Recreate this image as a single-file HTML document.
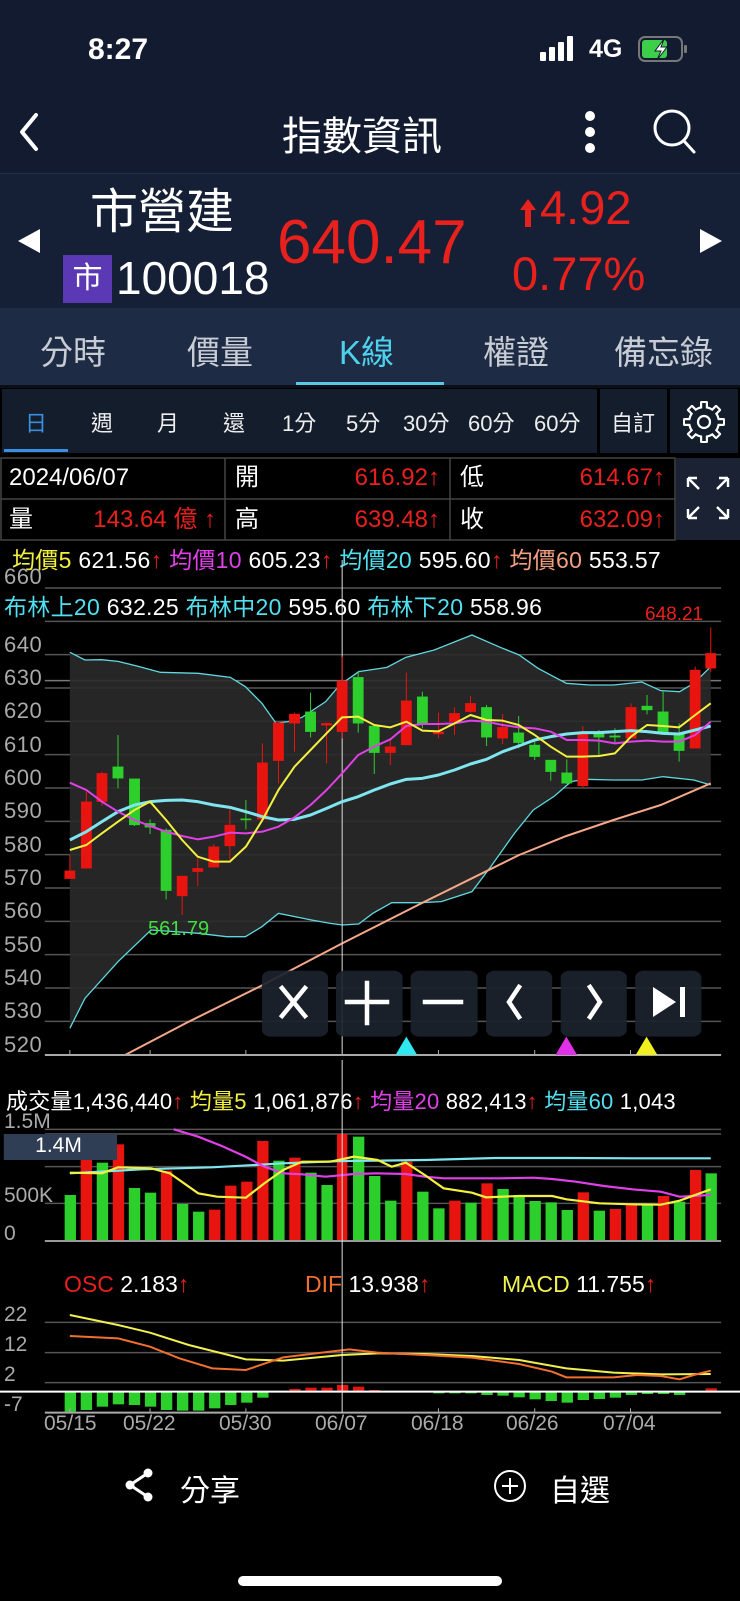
<!DOCTYPE html>
<html><head><meta charset="utf-8">
<style>
*{margin:0;padding:0;box-sizing:border-box}
body{width:740px;height:1601px;background:#000;position:relative;overflow:hidden;font-family:"Liberation Sans","Noto Sans CJK TC",sans-serif;color:#fff}
.a{position:absolute;white-space:nowrap}
.r{color:#e8211d}
.c{font-family:"Liberation Sans","Noto Sans CJK TC",sans-serif}
.t{line-height:28px;font-size:24px}
</style></head><body>
<div class="a" style="left:0;top:0;width:740px;height:174px;background:#121b2f"></div>
<div class="a" style="left:0;top:174px;width:740px;height:134px;background:#152036"></div>
<div class="a" style="left:0;top:173px;width:740px;height:1px;background:#22304a"></div>
<div class="a" style="left:0;top:308px;width:740px;height:77px;background:#1d2b45"></div>
<div class="a" style="left:0;top:385px;width:740px;height:3px;background:#0a0f18"></div>
<!-- status -->
<div class="a" style="left:88px;top:33px;font-size:30px;font-weight:bold">8:27</div>
<svg class="a" style="left:540px;top:36px" width="40" height="26"><rect x="0" y="16" width="6" height="9" rx="1" fill="#fff"/><rect x="9" y="11" width="6" height="14" rx="1" fill="#fff"/><rect x="18" y="6" width="6" height="19" rx="1" fill="#fff"/><rect x="27" y="0" width="6" height="25" rx="1" fill="#fff"/></svg>
<div class="a" style="left:589px;top:35px;font-size:25px;font-weight:bold">4G</div>
<svg class="a" style="left:638px;top:36px" width="52" height="26"><rect x="1" y="1" width="43" height="24" rx="6" fill="none" stroke="#777" stroke-width="2"/><rect x="4" y="4" width="25" height="18" rx="3" fill="#3ecf4a"/><rect x="46" y="9" width="3" height="8" rx="1" fill="#777"/><path d="M26 3 L17 15 L23 15 L19 24 L29 11 L23 11 Z" fill="#fff" stroke="#121b2f" stroke-width="1"/></svg>
<!-- nav -->
<svg class="a" style="left:16px;top:112px" width="26" height="40"><path d="M20 3 L6 20 L20 37" fill="none" stroke="#fff" stroke-width="4" stroke-linecap="round" stroke-linejoin="round"/></svg>
<div class="a c" style="left:282px;top:104px;font-size:40px">指數資訊</div>
<svg class="a" style="left:580px;top:108px" width="20" height="48"><circle cx="10" cy="8" r="5" fill="#fff"/><circle cx="10" cy="24" r="5" fill="#fff"/><circle cx="10" cy="40" r="5" fill="#fff"/></svg>
<svg class="a" style="left:652px;top:108px" width="46" height="48"><circle cx="20" cy="20" r="17" fill="none" stroke="#fff" stroke-width="3"/><path d="M32 33 L42 44" stroke="#fff" stroke-width="3" stroke-linecap="round"/></svg>
<!-- stock info -->
<svg class="a" style="left:16px;top:228px" width="26" height="26"><path d="M24 1 L2 13 L24 25 Z" fill="#fff"/></svg>
<svg class="a" style="left:698px;top:228px" width="26" height="26"><path d="M2 1 L24 13 L2 25 Z" fill="#fff"/></svg>
<div class="a c" style="left:90px;top:183px;font-size:48px;line-height:60px">市營建</div>
<div class="a c" style="left:63px;top:255px;width:49px;height:48px;background:#5b38b4;font-size:30px;text-align:center;line-height:48px">市</div>
<div class="a" style="left:116px;top:250px;font-size:46px;line-height:56px">100018</div>
<div class="a r" style="left:277px;top:208px;font-size:62px;line-height:70px">640.47</div>
<svg class="a" style="left:519px;top:198px" width="18" height="30"><path d="M9 1 L17 12 L12 12 L12 29 L6 29 L6 12 L1 12 Z" fill="#e8211d"/></svg>
<div class="a r" style="left:540px;top:180px;font-size:47px;line-height:56px">4.92</div>
<div class="a r" style="left:512px;top:246px;font-size:47px;line-height:56px">0.77%</div>
<!-- tabs -->
<div class="a c" style="left:40px;top:326px;font-size:33px;color:#c8ccd4">分時</div>
<div class="a c" style="left:187px;top:326px;font-size:33px;color:#c8ccd4">價量</div>
<div class="a c" style="left:339px;top:326px;font-size:33px;color:#4fd0ec">K線</div>
<div class="a c" style="left:483px;top:326px;font-size:33px;color:#c8ccd4">權證</div>
<div class="a c" style="left:614px;top:326px;font-size:33px;color:#c8ccd4">備忘錄</div>
<div class="a" style="left:296px;top:382px;width:148px;height:3px;background:#58c8e4"></div>
<!-- period bar -->
<div class="a" style="left:2px;top:389px;width:595px;height:64px;background:#141d2c"></div>
<div class="a" style="left:600px;top:389px;width:67px;height:64px;background:#141d2c"></div>
<div class="a" style="left:670px;top:389px;width:68px;height:64px;background:#141d2c"></div>
<div class="a" style="left:4px;top:449px;width:64px;height:3px;background:#3a8ee0"></div>
<div class="a c" style="top:406px;left:25px;font-size:22px;color:#3a8ee0">日</div>
<div class="a c" style="top:406px;left:91px;font-size:22px;color:#eee">週</div>
<div class="a c" style="top:406px;left:157px;font-size:22px;color:#eee">月</div>
<div class="a c" style="top:406px;left:223px;font-size:22px;color:#eee">還</div>
<div class="a c" style="top:406px;left:282px;font-size:22px;color:#eee">1分</div>
<div class="a c" style="top:406px;left:346px;font-size:22px;color:#eee">5分</div>
<div class="a c" style="top:406px;left:403px;font-size:22px;color:#eee">30分</div>
<div class="a c" style="top:406px;left:468px;font-size:22px;color:#eee">60分</div>
<div class="a c" style="top:406px;left:534px;font-size:22px;color:#eee">60分</div>
<div class="a c" style="top:406px;left:611px;font-size:22px;color:#eee">自訂</div>
<svg class="a" style="left:681px;top:399px" width="46" height="46" viewBox="0 0 46 46">
<g fill="#fff" transform="translate(23 23)">
<circle r="16"/>
<rect x="-4" y="-21" width="8" height="9" rx="1.5"/>
<rect x="-4" y="-21" width="8" height="9" rx="1.5" transform="rotate(45)"/>
<rect x="-4" y="-21" width="8" height="9" rx="1.5" transform="rotate(90)"/>
<rect x="-4" y="-21" width="8" height="9" rx="1.5" transform="rotate(135)"/>
<rect x="-4" y="-21" width="8" height="9" rx="1.5" transform="rotate(180)"/>
<rect x="-4" y="-21" width="8" height="9" rx="1.5" transform="rotate(225)"/>
<rect x="-4" y="-21" width="8" height="9" rx="1.5" transform="rotate(270)"/>
<rect x="-4" y="-21" width="8" height="9" rx="1.5" transform="rotate(315)"/>
</g>
<g fill="#141d2c" transform="translate(23 23)">
<circle r="13.8"/>
<rect x="-1.8" y="-19" width="3.6" height="7" transform="rotate(0)"/>
<rect x="-1.8" y="-19" width="3.6" height="7" transform="rotate(45)"/>
<rect x="-1.8" y="-19" width="3.6" height="7" transform="rotate(90)"/>
<rect x="-1.8" y="-19" width="3.6" height="7" transform="rotate(135)"/>
<rect x="-1.8" y="-19" width="3.6" height="7" transform="rotate(180)"/>
<rect x="-1.8" y="-19" width="3.6" height="7" transform="rotate(225)"/>
<rect x="-1.8" y="-19" width="3.6" height="7" transform="rotate(270)"/>
<rect x="-1.8" y="-19" width="3.6" height="7" transform="rotate(315)"/>
</g>
<circle cx="23" cy="23" r="6" fill="none" stroke="#fff" stroke-width="2.2"/></svg>
<!-- info table -->
<div class="a" style="left:676px;top:458px;width:64px;height:82px;background:#1a2233"></div>
<svg class="a" style="left:0;top:457px" width="676" height="84"><g fill="none" stroke="#444" stroke-width="1.5"><rect x="1" y="1" width="674" height="82"/><line x1="1" y1="42" x2="675" y2="42"/><line x1="225" y1="1" x2="225" y2="83"/><line x1="450" y1="1" x2="450" y2="83"/></g></svg>
<svg class="a" style="left:684px;top:474px" width="48" height="48"><g fill="none" stroke="#fff" stroke-width="2.4"><path d="M4 4 L15 15 M4 4 h9 M4 4 v9"/><path d="M44 4 L33 15 M44 4 h-9 M44 4 v9"/><path d="M4 44 L15 33 M4 44 h9 M4 44 v-9"/><path d="M44 44 L33 33 M44 44 h-9 M44 44 v-9"/></g></svg>
<div class="a t" style="left:9px;top:464px">2024/06/07</div>
<div class="a c t" style="left:9px;top:506px">量</div>
<div class="a r c t" style="left:0;width:216px;text-align:right;top:506px">143.64 億 ↑</div>
<div class="a c t" style="left:235px;top:464px">開</div>
<div class="a r t" style="left:0;width:440px;text-align:right;top:464px">616.92↑</div>
<div class="a c t" style="left:235px;top:506px">高</div>
<div class="a r t" style="left:0;width:440px;text-align:right;top:506px">639.48↑</div>
<div class="a c t" style="left:460px;top:464px">低</div>
<div class="a r t" style="left:0;width:665px;text-align:right;top:464px">614.67↑</div>
<div class="a c t" style="left:460px;top:506px">收</div>
<div class="a r t" style="left:0;width:665px;text-align:right;top:506px">632.09↑</div>
<!-- MA legend -->
<div class="a c" style="left:12px;top:546px;font-size:23px;line-height:28px;letter-spacing:0.3px"><span style="color:#f4f040">均價5</span> 621.56<span class="r">↑</span> <span style="color:#e040e8">均價10</span> 605.23<span class="r">↑</span> <span style="color:#50e0f0">均價20</span> 595.60<span class="r">↑</span> <span style="color:#f0a080">均價60</span> 553.57</div>
<!-- main chart -->
<svg class="a" style="left:0;top:560px" width="740" height="500" viewBox="0 -180 1568 1500" preserveAspectRatio="none">
<g stroke="#555" stroke-width="1.5">
<line x1="95" x2="1528" y1="-96" y2="-96" vector-effect="non-scaling-stroke"/>
<line x1="95" x2="1528" y1="4" y2="4" vector-effect="non-scaling-stroke"/>
<line x1="95" x2="1528" y1="104" y2="104" vector-effect="non-scaling-stroke"/>
<line x1="95" x2="1528" y1="204" y2="204" vector-effect="non-scaling-stroke"/>
<line x1="95" x2="1528" y1="182" y2="182" stroke="#777" vector-effect="non-scaling-stroke"/>
<line x1="95" x2="1528" y1="304" y2="304" vector-effect="non-scaling-stroke"/>
<line x1="95" x2="1528" y1="404" y2="404" vector-effect="non-scaling-stroke"/>
<line x1="95" x2="1528" y1="504" y2="504" vector-effect="non-scaling-stroke"/>
<line x1="95" x2="1528" y1="604" y2="604" vector-effect="non-scaling-stroke"/>
<line x1="95" x2="1528" y1="704" y2="704" vector-effect="non-scaling-stroke"/>
<line x1="95" x2="1528" y1="804" y2="804" vector-effect="non-scaling-stroke"/>
<line x1="95" x2="1528" y1="904" y2="904" vector-effect="non-scaling-stroke"/>
<line x1="95" x2="1528" y1="1004" y2="1004" vector-effect="non-scaling-stroke"/>
<line x1="95" x2="1528" y1="1104" y2="1104" vector-effect="non-scaling-stroke"/>
<line x1="95" x2="1528" y1="1204" y2="1204" vector-effect="non-scaling-stroke"/>
</g>
<polygon fill="#2a2a2a" fill-opacity="0.9" points="148,97 180,120 215,119 250,124 290,138 340,157 420,160 488,172 520,200 555,250 585,310 610,305 640,292 690,245 720,195 760,155 820,142 860,112 920,90 1000,45 1060,82 1100,105 1140,145 1200,190 1250,195 1300,195 1360,186 1400,212 1440,215 1470,190 1506,140 1506,495 1470,480 1405,470 1360,480 1300,480 1240,478 1210,485 1175,528 1130,570 1090,640 1040,740 1000,815 935,845 890,848 830,848 790,880 760,912 725,915 700,910 660,900 590,880 555,920 520,950 480,950 420,940 320,930 250,1025 180,1135 148,1225"/>
<g fill="none" stroke="#5fd8e0" stroke-width="1.3">
<polyline vector-effect="non-scaling-stroke" points="148,97 180,120 215,119 250,124 290,138 340,157 420,160 488,172 520,200 555,250 585,310 610,305 640,292 690,245 720,195 760,155 820,142 860,112 920,90 1000,45 1060,82 1100,105 1140,145 1200,190 1250,195 1300,195 1360,186 1400,212 1440,215 1470,190 1506,140"/>
<polyline vector-effect="non-scaling-stroke" points="148,1225 180,1135 250,1025 320,930 420,940 480,950 520,950 555,920 590,880 660,900 700,910 725,915 760,912 790,880 830,848 890,848 935,845 1000,815 1040,740 1090,640 1130,570 1175,528 1210,485 1240,478 1300,480 1360,480 1405,470 1470,480 1506,495"/>
</g>
<polyline fill="none" stroke="#f4a888" stroke-width="2" vector-effect="non-scaling-stroke" points="265,1305 400,1205 550,1100 725,970 900,845 1000,775 1100,705 1200,648 1300,600 1400,555 1506,490"/>
<line x1="725" x2="725" y1="-180" y2="1305" stroke="#ddd" stroke-width="1" vector-effect="non-scaling-stroke"/>
<g stroke="#e8140f" fill="#e8140f">
<line x1="148" x2="148" y1="705" y2="776" vector-effect="non-scaling-stroke"/><rect x="137" y="752" width="22" height="24"/>
<line x1="183" x2="183" y1="515" y2="745" vector-effect="non-scaling-stroke"/><rect x="172" y="545" width="22" height="200"/>
<line x1="216" x2="216" y1="455" y2="558" vector-effect="non-scaling-stroke"/><rect x="205" y="460" width="22" height="85"/>
<line x1="386" x2="386" y1="768" y2="885" vector-effect="non-scaling-stroke"/><rect x="375" y="768" width="22" height="60"/>
<line x1="419" x2="419" y1="715" y2="798" vector-effect="non-scaling-stroke"/><rect x="408" y="745" width="22" height="10"/>
<line x1="453" x2="453" y1="672" y2="742" vector-effect="non-scaling-stroke"/><rect x="442" y="680" width="22" height="62"/>
<line x1="487" x2="487" y1="568" y2="718" vector-effect="non-scaling-stroke"/><rect x="476" y="615" width="22" height="63"/>
<line x1="556" x2="556" y1="370" y2="598" vector-effect="non-scaling-stroke"/><rect x="545" y="428" width="22" height="170"/>
<line x1="590" x2="590" y1="308" y2="490" vector-effect="non-scaling-stroke"/><rect x="579" y="308" width="22" height="114"/>
<line x1="624" x2="624" y1="278" y2="395" vector-effect="non-scaling-stroke"/><rect x="613" y="282" width="22" height="28"/>
<line x1="692" x2="692" y1="308" y2="430" vector-effect="non-scaling-stroke"/><rect x="681" y="310" width="22" height="6"/>
<line x1="725" x2="725" y1="110" y2="355" vector-effect="non-scaling-stroke"/><rect x="714" y="182" width="22" height="153"/>
<line x1="827" x2="827" y1="355" y2="435" vector-effect="non-scaling-stroke"/><rect x="816" y="380" width="22" height="18"/>
<line x1="861" x2="861" y1="158" y2="375" vector-effect="non-scaling-stroke"/><rect x="850" y="242" width="22" height="133"/>
<line x1="929" x2="929" y1="278" y2="355" vector-effect="non-scaling-stroke"/><rect x="918" y="335" width="22" height="7"/>
<line x1="963" x2="963" y1="262" y2="345" vector-effect="non-scaling-stroke"/><rect x="952" y="280" width="22" height="25"/>
<line x1="997" x2="997" y1="228" y2="278" vector-effect="non-scaling-stroke"/><rect x="986" y="250" width="22" height="25"/>
<line x1="1065" x2="1065" y1="282" y2="372" vector-effect="non-scaling-stroke"/><rect x="1054" y="322" width="22" height="33"/>
<line x1="1235" x2="1235" y1="318" y2="502" vector-effect="non-scaling-stroke"/><rect x="1224" y="340" width="22" height="158"/>
<line x1="1337" x2="1337" y1="250" y2="355" vector-effect="non-scaling-stroke"/><rect x="1326" y="262" width="22" height="93"/>
<line x1="1473" x2="1473" y1="140" y2="385" vector-effect="non-scaling-stroke"/><rect x="1462" y="150" width="22" height="235"/>
<line x1="1506" x2="1506" y1="22" y2="155" vector-effect="non-scaling-stroke"/><rect x="1495" y="100" width="22" height="45"/>
</g>
<g stroke="#2ccf2c" fill="#2ccf2c">
<line x1="250" x2="250" y1="345" y2="505" vector-effect="non-scaling-stroke"/><rect x="239" y="440" width="22" height="35"/>
<line x1="285" x2="285" y1="476" y2="618" vector-effect="non-scaling-stroke"/><rect x="274" y="476" width="22" height="139"/>
<line x1="318" x2="318" y1="598" y2="642" vector-effect="non-scaling-stroke"/><rect x="307" y="610" width="22" height="12"/>
<line x1="352" x2="352" y1="625" y2="838" vector-effect="non-scaling-stroke"/><rect x="341" y="630" width="22" height="182"/>
<line x1="521" x2="521" y1="540" y2="628" vector-effect="non-scaling-stroke"/><rect x="510" y="596" width="22" height="4"/>
<line x1="658" x2="658" y1="218" y2="352" vector-effect="non-scaling-stroke"/><rect x="647" y="275" width="22" height="60"/>
<line x1="759" x2="759" y1="158" y2="338" vector-effect="non-scaling-stroke"/><rect x="748" y="172" width="22" height="138"/>
<line x1="793" x2="793" y1="318" y2="462" vector-effect="non-scaling-stroke"/><rect x="782" y="318" width="22" height="80"/>
<line x1="895" x2="895" y1="215" y2="325" vector-effect="non-scaling-stroke"/><rect x="884" y="230" width="22" height="82"/>
<line x1="1031" x2="1031" y1="255" y2="378" vector-effect="non-scaling-stroke"/><rect x="1020" y="262" width="22" height="90"/>
<line x1="1099" x2="1099" y1="288" y2="385" vector-effect="non-scaling-stroke"/><rect x="1088" y="338" width="22" height="30"/>
<line x1="1133" x2="1133" y1="360" y2="420" vector-effect="non-scaling-stroke"/><rect x="1122" y="375" width="22" height="35"/>
<line x1="1167" x2="1167" y1="420" y2="482" vector-effect="non-scaling-stroke"/><rect x="1156" y="420" width="22" height="35"/>
<line x1="1201" x2="1201" y1="418" y2="492" vector-effect="non-scaling-stroke"/><rect x="1190" y="458" width="22" height="32"/>
<line x1="1269" x2="1269" y1="330" y2="408" vector-effect="non-scaling-stroke"/><rect x="1258" y="340" width="22" height="12"/>
<line x1="1303" x2="1303" y1="325" y2="368" vector-effect="non-scaling-stroke"/><rect x="1292" y="347" width="22" height="5"/>
<line x1="1371" x2="1371" y1="225" y2="283" vector-effect="non-scaling-stroke"/><rect x="1360" y="258" width="22" height="12"/>
<line x1="1405" x2="1405" y1="215" y2="338" vector-effect="non-scaling-stroke"/><rect x="1394" y="275" width="22" height="63"/>
<line x1="1439" x2="1439" y1="310" y2="425" vector-effect="non-scaling-stroke"/><rect x="1428" y="340" width="22" height="52"/>
</g>
<g fill="none" stroke-width="2" stroke-linejoin="round">
<polyline vector-effect="non-scaling-stroke" stroke="#7fe6f0" stroke-width="3" points="148,660 183,635 216,605 250,575 285,555 318,545 352,541 386,540 419,545 453,555 487,562 521,575 556,590 590,600 624,598 658,585 692,565 725,545 759,530 793,510 827,492 861,478 895,475 929,465 963,450 997,432 1031,418 1065,395 1099,378 1133,360 1167,350 1201,342 1235,338 1269,338 1303,335 1337,332 1371,335 1405,340 1439,342 1473,330 1506,318"/>
<polyline vector-effect="non-scaling-stroke" stroke="#e040e8" points="148,488 183,510 216,545 250,575 285,600 318,618 352,635 386,648 419,658 453,650 487,638 521,640 556,635 590,620 624,592 658,555 692,510 725,460 759,405 793,380 827,358 861,318 895,312 929,312 963,310 997,302 1031,305 1065,315 1099,322 1133,325 1167,335 1201,360 1235,360 1269,362 1303,370 1337,365 1371,362 1405,365 1439,365 1473,345 1506,305"/>
<polyline vector-effect="non-scaling-stroke" stroke="#f4f040" points="148,690 183,675 216,640 250,605 285,570 318,545 352,600 386,660 419,710 453,725 487,725 521,680 556,600 590,510 624,440 658,390 692,340 725,292 759,290 793,315 827,322 861,305 895,332 929,334 963,310 997,285 1031,300 1065,302 1099,315 1133,345 1167,380 1201,410 1235,410 1269,408 1303,400 1337,350 1371,315 1405,318 1439,322 1473,285 1506,250"/>
</g>
<line x1="95" x2="1528" y1="1305" y2="1305" stroke="#aaa" stroke-width="2" vector-effect="non-scaling-stroke"/>
<g stroke="#aaa"><line x1="148" x2="148" y1="1290" y2="1305" vector-effect="non-scaling-stroke"/><line x1="318" x2="318" y1="1290" y2="1305" vector-effect="non-scaling-stroke"/><line x1="521" x2="521" y1="1290" y2="1305" vector-effect="non-scaling-stroke"/><line x1="929" x2="929" y1="1290" y2="1305" vector-effect="non-scaling-stroke"/><line x1="1133" x2="1133" y1="1290" y2="1305" vector-effect="non-scaling-stroke"/><line x1="1336" x2="1336" y1="1290" y2="1305" vector-effect="non-scaling-stroke"/></g>
<g fill="#1c232e" fill-opacity="0.92"><rect x="555" y="1052" width="140" height="198" rx="20"/><rect x="712" y="1052" width="141" height="198" rx="20"/><rect x="870" y="1052" width="142" height="198" rx="20"/><rect x="1030" y="1052" width="140" height="198" rx="20"/><rect x="1188" y="1052" width="140" height="198" rx="20"/><rect x="1346" y="1052" width="140" height="198" rx="20"/></g>
<polygon points="838,1305 861,1250 884,1305" fill="#30e8f0"/>
<polygon points="1177,1305 1200,1250 1223,1305" fill="#e030e8"/>
<polygon points="1347,1305 1370,1250 1393,1305" fill="#f0f020"/>
</svg>
<!-- control symbols -->
<svg class="a" style="left:260px;top:970px" width="450" height="66"><g stroke="#fff" stroke-width="4.5" fill="none" stroke-linecap="square"><path d="M22 18 L45 46 M45 18 L22 46"/><path d="M87 32 h40 M107 13 v40"/><path d="M165 32 h36"/><path d="M259 17 L249 32 L259 47"/><path d="M330 17 L340 32 L330 47"/></g><path d="M393 17 L393 47 L416 32 Z" fill="#fff"/><rect x="420" y="17" width="5" height="30" fill="#fff"/></svg>
<!-- y labels -->
<div class="a" style="left:4px;top:0;font-size:22px;color:#aaa;line-height:22px;letter-spacing:0.5px">
<div class="a" style="top:566px">660</div>
<div class="a" style="top:634px">640</div><div class="a" style="top:667px">630</div><div class="a" style="top:700px">620</div><div class="a" style="top:734px">610</div><div class="a" style="top:767px">600</div><div class="a" style="top:800px">590</div><div class="a" style="top:834px">580</div><div class="a" style="top:867px">570</div><div class="a" style="top:900px">560</div><div class="a" style="top:934px">550</div><div class="a" style="top:967px">540</div><div class="a" style="top:1000px">530</div><div class="a" style="top:1034px">520</div>
</div>
<div class="a c" style="left:4px;top:593px;font-size:23px;line-height:28px;color:#50e0f0;letter-spacing:0.3px">布林上20 <span style="color:#fff">632.25</span> 布林中20 <span style="color:#fff">595.60</span> 布林下20 <span style="color:#fff">558.96</span></div>
<div class="a r" style="left:645px;top:604px;font-size:19px">648.21</div>
<div class="a" style="left:148px;top:918px;font-size:20px;color:#40e040">561.79</div>
<!-- volume -->
<div class="a c" style="left:6px;top:1088px;font-size:22px;line-height:28px;letter-spacing:0.2px">成交量1,436,440<span class="r">↑</span> <span style="color:#f4f040">均量5</span> 1,061,876<span class="r">↑</span> <span style="color:#e040e8">均量20</span> 882,413<span class="r">↑</span> <span style="color:#50e0f0">均量60</span> 1,043</div>
<svg class="a" style="left:0;top:1060px" width="740" height="380" viewBox="0 0 1568 1140" preserveAspectRatio="none">
<g stroke="#555" stroke-width="1.5"><line x1="95" x2="1528" y1="208" y2="208" vector-effect="non-scaling-stroke"/><line x1="95" x2="1528" y1="222" y2="222" vector-effect="non-scaling-stroke"/><line x1="95" x2="1528" y1="320" y2="320" vector-effect="non-scaling-stroke"/><line x1="95" x2="1528" y1="430" y2="430" vector-effect="non-scaling-stroke"/>
<line x1="95" x2="1528" y1="787" y2="787" vector-effect="non-scaling-stroke"/><line x1="95" x2="1528" y1="878" y2="878" vector-effect="non-scaling-stroke"/><line x1="95" x2="1528" y1="968" y2="968" vector-effect="non-scaling-stroke"/></g>
<g fill="#e8140f">
<rect x="171" y="290" width="24" height="253"/><rect x="239" y="253" width="24" height="290"/><rect x="341" y="332" width="24" height="211"/><rect x="443" y="449" width="24" height="94"/><rect x="477" y="377" width="24" height="166"/><rect x="511" y="365" width="24" height="178"/><rect x="545" y="243" width="24" height="300"/><rect x="613" y="293" width="24" height="250"/><rect x="714" y="222" width="22" height="321"/><rect x="850" y="305" width="24" height="238"/><rect x="952" y="422" width="24" height="121"/><rect x="1020" y="370" width="24" height="173"/><rect x="1224" y="397" width="24" height="146"/><rect x="1292" y="447" width="24" height="96"/><rect x="1326" y="435" width="24" height="108"/><rect x="1394" y="408" width="24" height="135"/><rect x="1462" y="330" width="24" height="213"/>
</g>
<g fill="#2ccf2c">
<rect x="137" y="405" width="24" height="138"/><rect x="205" y="308" width="24" height="235"/><rect x="273" y="384" width="24" height="159"/><rect x="307" y="398" width="24" height="145"/><rect x="375" y="432" width="24" height="111"/><rect x="409" y="455" width="24" height="88"/><rect x="579" y="302" width="24" height="241"/><rect x="647" y="338" width="24" height="205"/><rect x="681" y="375" width="24" height="168"/><rect x="748" y="230" width="24" height="313"/><rect x="782" y="348" width="24" height="195"/><rect x="816" y="422" width="24" height="121"/><rect x="884" y="395" width="24" height="148"/><rect x="918" y="445" width="24" height="98"/><rect x="986" y="428" width="24" height="115"/><rect x="1054" y="387" width="24" height="156"/><rect x="1088" y="405" width="24" height="138"/><rect x="1122" y="423" width="24" height="120"/><rect x="1156" y="427" width="24" height="116"/><rect x="1190" y="450" width="24" height="93"/><rect x="1258" y="452" width="24" height="91"/><rect x="1360" y="435" width="24" height="108"/><rect x="1428" y="425" width="24" height="118"/><rect x="1495" y="340" width="24" height="203"/>
</g>
<g fill="none" stroke-width="2.2">
<polyline vector-effect="non-scaling-stroke" stroke="#7fe6f0" points="148,340 300,328 450,322 600,310 725,303 800,302 900,300 1050,294 1200,294 1350,295 1506,295"/>
<polyline vector-effect="non-scaling-stroke" stroke="#e040e8" points="368,208 420,230 470,258 520,290 560,320 600,340 640,343 690,350 750,342 800,340 860,342 900,350 940,355 1000,355 1060,355 1130,353 1170,357 1220,365 1280,378 1340,388 1400,395 1440,410 1506,405"/>
<polyline vector-effect="non-scaling-stroke" stroke="#f4f040" points="148,338 216,340 250,322 320,325 360,340 420,400 460,410 521,413 560,370 600,330 640,305 700,305 750,290 800,300 830,320 860,308 900,345 940,385 1000,398 1030,412 1100,408 1170,408 1200,418 1270,430 1340,433 1400,434 1440,422 1506,388"/>
</g>
<line x1="95" x2="1528" y1="543" y2="543" stroke="#999" stroke-width="2" vector-effect="non-scaling-stroke"/>
<rect x="8" y="222" width="240" height="78" fill="#2f3d55"/>
<g fill="#2ccf2c">
<rect x="137" y="995" width="24" height="60"/><rect x="171" y="995" width="24" height="55"/><rect x="205" y="995" width="24" height="45"/><rect x="239" y="995" width="24" height="38"/><rect x="273" y="995" width="24" height="40"/><rect x="307" y="995" width="24" height="45"/><rect x="341" y="995" width="24" height="55"/><rect x="375" y="995" width="24" height="57"/><rect x="409" y="995" width="24" height="57"/><rect x="443" y="995" width="24" height="50"/><rect x="477" y="995" width="24" height="40"/><rect x="511" y="995" width="24" height="33"/><rect x="545" y="995" width="24" height="18"/>
<rect x="918" y="995" width="24" height="5"/><rect x="952" y="995" width="24" height="5"/><rect x="986" y="995" width="24" height="5"/><rect x="1020" y="995" width="24" height="10"/><rect x="1054" y="995" width="24" height="12"/><rect x="1088" y="995" width="24" height="17"/><rect x="1122" y="995" width="24" height="23"/><rect x="1156" y="995" width="24" height="28"/><rect x="1190" y="995" width="24" height="33"/><rect x="1224" y="995" width="24" height="25"/><rect x="1258" y="995" width="24" height="22"/><rect x="1292" y="995" width="24" height="18"/><rect x="1326" y="995" width="24" height="10"/><rect x="1360" y="995" width="24" height="7"/><rect x="1394" y="995" width="24" height="7"/><rect x="1428" y="995" width="24" height="10"/>
</g>
<g fill="#e8140f">
<rect x="613" y="987" width="24" height="8"/><rect x="647" y="983" width="24" height="12"/><rect x="681" y="983" width="24" height="12"/><rect x="714" y="975" width="24" height="20"/><rect x="748" y="980" width="24" height="15"/><rect x="782" y="990" width="24" height="5"/><rect x="1495" y="985" width="24" height="10"/>
</g>
<line x1="0" x2="1568" y1="995" y2="995" stroke="#fff" stroke-width="2" vector-effect="non-scaling-stroke"/>
<g fill="none" stroke-width="2">
<polyline vector-effect="non-scaling-stroke" stroke="#f0f050" points="148,765 250,795 318,818 400,855 521,898 600,902 725,885 800,880 900,882 1000,888 1100,900 1200,925 1300,938 1400,943 1506,942"/>
<polyline vector-effect="non-scaling-stroke" stroke="#f07030" points="148,828 250,835 318,860 380,895 450,925 521,930 600,892 700,875 740,868 800,878 900,885 1000,893 1100,912 1170,935 1200,952 1300,952 1350,945 1400,948 1440,958 1470,945 1506,932"/>
</g>
<line x1="95" x2="1528" y1="1058" y2="1058" stroke="#aaa" stroke-width="2" vector-effect="non-scaling-stroke"/>
<g stroke="#aaa"><line x1="148" x2="148" y1="1045" y2="1058" vector-effect="non-scaling-stroke"/><line x1="318" x2="318" y1="1045" y2="1058" vector-effect="non-scaling-stroke"/><line x1="521" x2="521" y1="1045" y2="1058" vector-effect="non-scaling-stroke"/><line x1="929" x2="929" y1="1045" y2="1058" vector-effect="non-scaling-stroke"/><line x1="1133" x2="1133" y1="1045" y2="1058" vector-effect="non-scaling-stroke"/><line x1="1336" x2="1336" y1="1045" y2="1058" vector-effect="non-scaling-stroke"/></g>
<line x1="725" x2="725" y1="0" y2="1058" stroke="#ddd" stroke-width="1" vector-effect="non-scaling-stroke"/>
</svg>
<div class="a" style="left:4px;top:1110px;font-size:21px;color:#aaa">1.5M</div>
<div class="a" style="left:0;top:1134px;width:117px;text-align:center;font-size:21px;color:#fff">1.4M</div>
<div class="a" style="left:4px;top:1184px;font-size:21px;color:#aaa">500K</div>
<div class="a" style="left:4px;top:1222px;font-size:21px;color:#aaa">0</div>
<div class="a" style="left:64px;top:1271px;font-size:23px"><span class="r">OSC</span> 2.183<span class="r">↑</span></div>
<div class="a" style="left:305px;top:1271px;font-size:23px"><span style="color:#f07030">DIF</span> 13.938<span class="r">↑</span></div>
<div class="a" style="left:502px;top:1271px;font-size:23px"><span style="color:#f0f050">MACD</span> 11.755<span class="r">↑</span></div>
<div class="a" style="left:4px;top:1303px;font-size:21px;color:#aaa">22</div>
<div class="a" style="left:4px;top:1333px;font-size:21px;color:#aaa">12</div>
<div class="a" style="left:4px;top:1363px;font-size:21px;color:#aaa">2</div>
<div class="a" style="left:4px;top:1393px;font-size:21px;color:#aaa">-7</div>
<div class="a" style="top:1412px;font-size:21px;color:#aaa;left:0">
<span class="a" style="left:44px">05/15</span><span class="a" style="left:123px">05/22</span><span class="a" style="left:219px">05/30</span><span class="a" style="left:315px">06/07</span><span class="a" style="left:411px">06/18</span><span class="a" style="left:506px">06/26</span><span class="a" style="left:603px">07/04</span></div>
<!-- bottom -->
<svg class="a" style="left:124px;top:1468px" width="32" height="34"><g fill="#fff"><circle cx="24" cy="5" r="4.5"/><circle cx="6" cy="17" r="4.5"/><circle cx="24" cy="29" r="4.5"/></g><path d="M24 5 L6 17 L24 29" fill="none" stroke="#fff" stroke-width="3"/></svg>
<div class="a c" style="left:180px;top:1466px;font-size:30px">分享</div>
<svg class="a" style="left:493px;top:1469px" width="34" height="34"><circle cx="17" cy="17" r="15" fill="none" stroke="#fff" stroke-width="2"/><path d="M17 9 v16 M9 17 h16" stroke="#fff" stroke-width="2"/></svg>
<div class="a c" style="left:550px;top:1466px;font-size:30px">自選</div>
<div class="a" style="left:238px;top:1576px;width:264px;height:10px;border-radius:5px;background:#fff"></div>
</body></html>
